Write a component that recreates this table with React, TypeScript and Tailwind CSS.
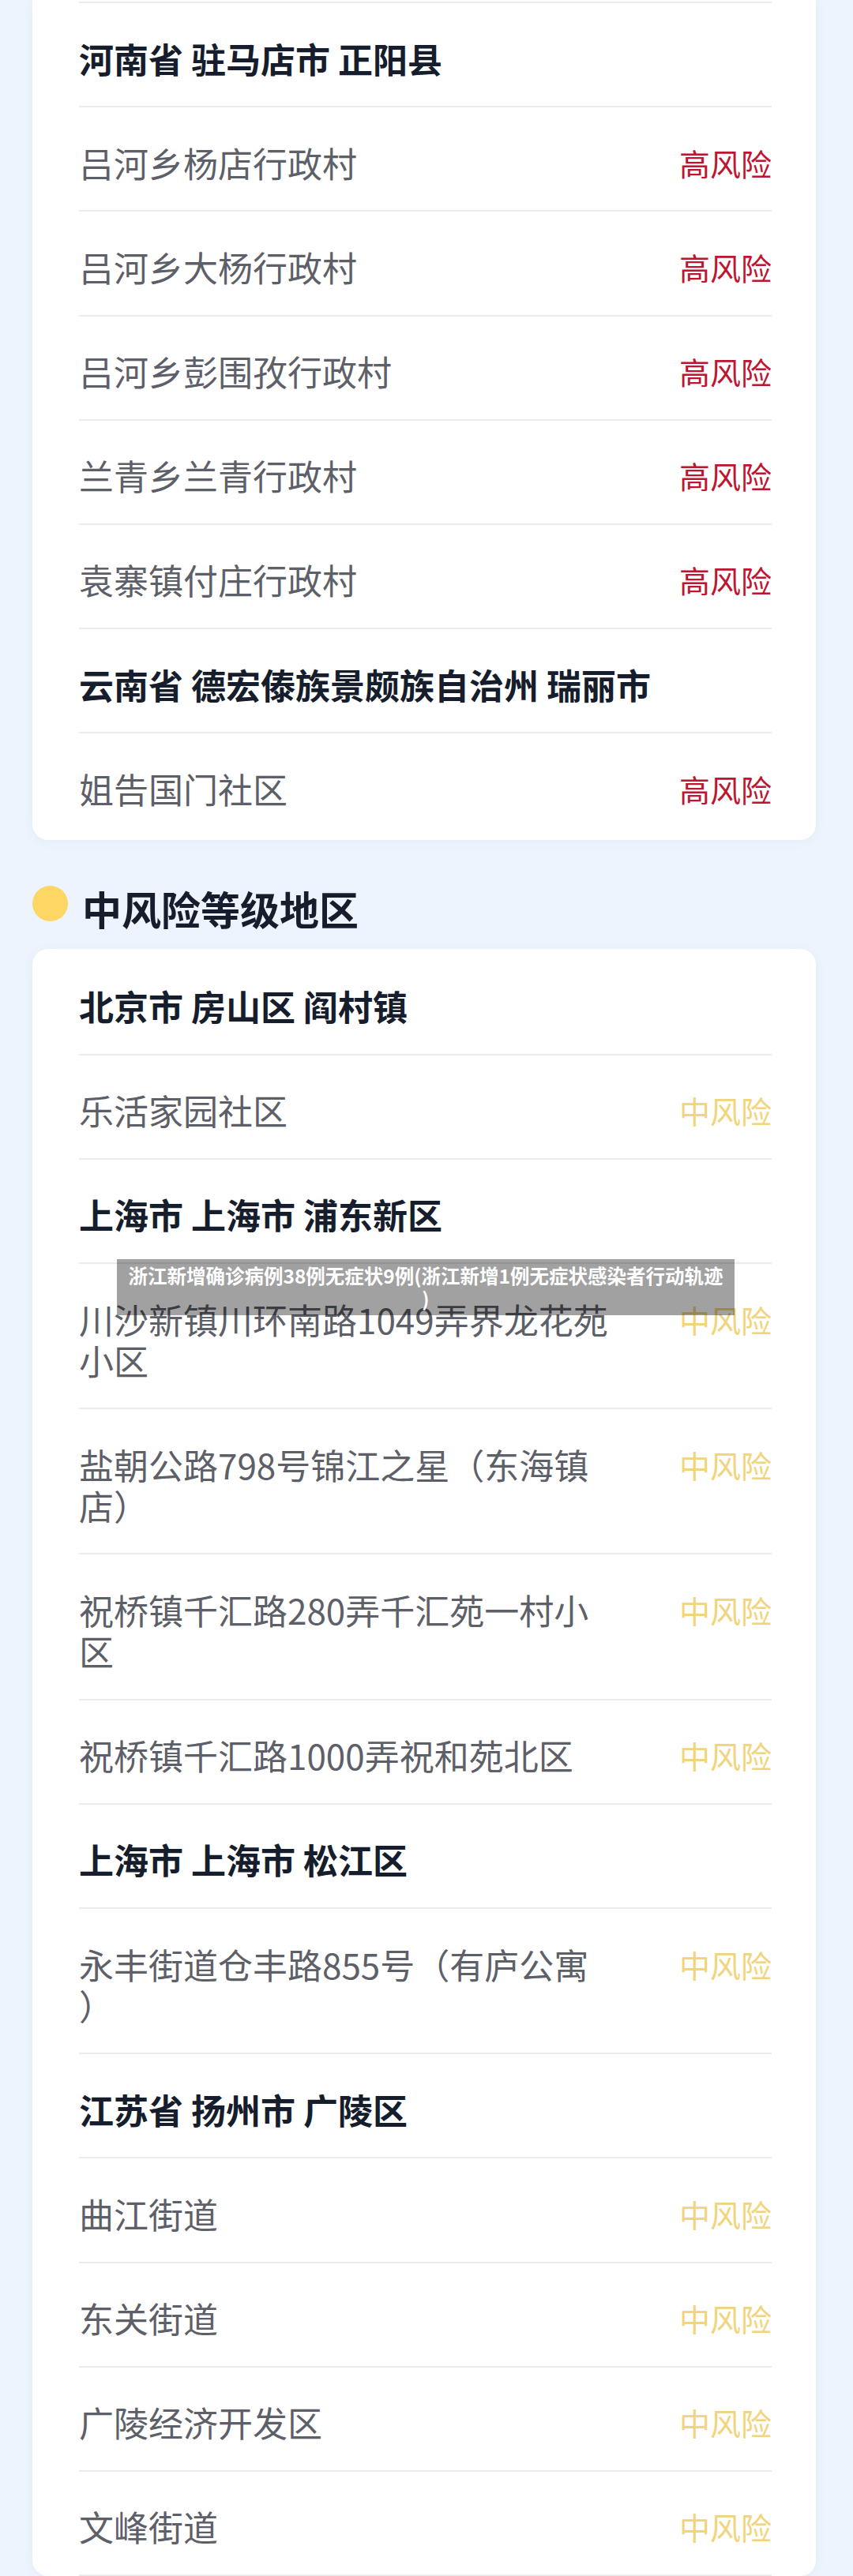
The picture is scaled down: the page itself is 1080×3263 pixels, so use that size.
type Item =
	| { kind: "heading"; text: string }
	| { kind: "row"; text: string; level: "high" | "mid" };

const highItems: Item[] = [
	{ kind: "heading", text: "河南省 驻马店市 正阳县" },
	{ kind: "row", text: "吕河乡杨店行政村", level: "high" },
	{ kind: "row", text: "吕河乡大杨行政村", level: "high" },
	{ kind: "row", text: "吕河乡彭围孜行政村", level: "high" },
	{ kind: "row", text: "兰青乡兰青行政村", level: "high" },
	{ kind: "row", text: "袁寨镇付庄行政村", level: "high" },
	{ kind: "heading", text: "云南省 德宏傣族景颇族自治州 瑞丽市" },
	{ kind: "row", text: "姐告国门社区", level: "high" },
];

const midItems: Item[] = [
	{ kind: "heading", text: "北京市 房山区 阎村镇" },
	{ kind: "row", text: "乐活家园社区", level: "mid" },
	{ kind: "heading", text: "上海市 上海市 浦东新区" },
	{ kind: "row", text: "川沙新镇川环南路1049弄界龙花苑小区", level: "mid" },
	{ kind: "row", text: "盐朝公路798号锦江之星（东海镇店）", level: "mid" },
	{ kind: "row", text: "祝桥镇千汇路280弄千汇苑一村小区", level: "mid" },
	{ kind: "row", text: "祝桥镇千汇路1000弄祝和苑北区", level: "mid" },
	{ kind: "heading", text: "上海市 上海市 松江区" },
	{ kind: "row", text: "永丰街道仓丰路855号（有庐公寓）", level: "mid" },
	{ kind: "heading", text: "江苏省 扬州市 广陵区" },
	{ kind: "row", text: "曲江街道", level: "mid" },
	{ kind: "row", text: "东关街道", level: "mid" },
	{ kind: "row", text: "广陵经济开发区", level: "mid" },
	{ kind: "row", text: "文峰街道", level: "mid" },
];

function Divider() {
	return <div className="h-[2px] bg-[#ebebed]" />;
}

function Entry({ item }: { item: Item }) {
	if (item.kind === "heading") {
		return (
			<div className="pt-[43.5px] pb-[34.7px] text-[44px] leading-[52px] font-bold text-[#161d2c]">
				{item.text}
			</div>
		);
	}
	return (
		<div className="flex items-start justify-between pt-[43.5px] pb-[34.7px]">
			<div className="w-[680px] text-[44px] leading-[52px] text-[#5d6068] [line-break:anywhere] [text-spacing-trim:space-all]">
				{item.text}
			</div>
			{item.level === "high" ? (
				<div className="text-[39px] leading-[52px] text-[#be1630]">高风险</div>
			) : (
				<div className="text-[39px] leading-[52px] text-[#f1d47c]">中风险</div>
			)}
		</div>
	);
}

export default function App() {
	return (
		<div className="relative h-[3263px] overflow-hidden bg-[#edf4fd] font-['Noto_Sans_CJK_SC','Noto_Sans',sans-serif]">
			{/* high risk card, its top is cut off above the screen */}
			<div className="ml-[41px] w-[992px] rounded-b-[20px] bg-white pl-[59px] pr-[56px] pt-[2px] pb-[4px] shadow-[0_2px_14px_rgba(40,90,160,0.05)]">
				<Divider />
				{highItems.map((item, i) => (
					<div key={i}>
						{i > 0 && <Divider />}
						<Entry item={item} />
					</div>
				))}
			</div>

			<div className="ml-[41px] mt-[56px] mb-[22px] flex items-start gap-[18px]">
				<div className="mt-[2px] h-[45px] w-[45px] rounded-full bg-[#fdd663]" />
				<h2 className="text-[50px] leading-[60px] font-bold text-[#161d2c]">中风险等级地区</h2>
			</div>

			<div className="ml-[41px] w-[992px] rounded-[20px] bg-white pl-[59px] pr-[56px] pt-[3px] shadow-[0_2px_14px_rgba(40,90,160,0.05)]">
				{midItems.map((item, i) => (
					<div key={i}>
						{i > 0 && <Divider />}
						<Entry item={item} />
					</div>
				))}
				<Divider />
			</div>

			{/* article title overlay */}
			<div className="absolute left-[148px] top-[1595px] h-[71px] w-[782px] bg-[rgba(0,0,0,0.37)] px-[10px] pt-[6px] text-center text-[24.5px] leading-[29px] font-bold text-white">
				浙江新增确诊病例38例无症状9例(浙江新增1例无症状感染者行动轨迹
				<br />)
			</div>
		</div>
	);
}
